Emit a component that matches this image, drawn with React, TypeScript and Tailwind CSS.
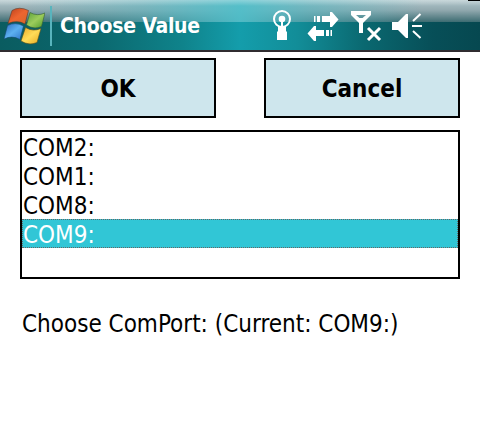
import React from "react";

const ports = ["COM2:", "COM1:", "COM8:", "COM9:"];

function WindowsFlag() {
  return (
    <svg width="42" height="40" viewBox="3 6 42 40" className="block">
      <defs>
        <linearGradient id="red" x1="0" y1="0" x2="1" y2="1"><stop offset="0" stopColor="#b8401c" /><stop offset=".5" stopColor="#ee6530" /><stop offset="1" stopColor="#d86828" /></linearGradient>
        <linearGradient id="green" x1="0" y1="0" x2="1" y2="1"><stop offset="0" stopColor="#5aa03a" /><stop offset=".5" stopColor="#9ccc5c" /><stop offset="1" stopColor="#4e9a28" /></linearGradient>
        <linearGradient id="blue" x1="0" y1="0" x2="1" y2="1"><stop offset="0" stopColor="#2c6cc0" /><stop offset=".5" stopColor="#5cb0f0" /><stop offset="1" stopColor="#2c74c8" /></linearGradient>
        <linearGradient id="yellow" x1="0" y1="0" x2="1" y2="1"><stop offset="0" stopColor="#e8a828" /><stop offset=".5" stopColor="#ffdc58" /><stop offset="1" stopColor="#e8a820" /></linearGradient>
      </defs>
      <path d="M12 10.500Q19 6 28.500 10.500L25 24Q17 19.500 8 23.500Z" fill="url(#red)" stroke="#5b3b2b" strokeWidth=".6" />
      <path d="M30 12.500Q37 16.500 45 13L41.500 26.500Q34 30 26.500 25Z" fill="url(#green)" stroke="#355f36" strokeWidth=".6" />
      <path d="M7.500 25.500Q15 21.500 23.500 26L20 39.500Q12 35 4 39Z" fill="url(#blue)" stroke="#134a72" strokeWidth=".6" />
      <path d="M25.500 27.500Q33 32 41 28.500L37 42.500Q29 46 21 41Z" fill="url(#yellow)" stroke="#57501d" strokeWidth=".6" />
    </svg>
  );
}

function StatusIcons() {
  return (
    <svg width="152" height="36" viewBox="272 8 152 36" fill="#fff" className="block">
      <circle cx="282" cy="19" r="8" fill="none" stroke="#fff" strokeWidth="2" />
      <circle cx="282" cy="19" r="3.300" />
      <path d="M281 20h2v7h3v4l1 1v8h-10v-8l1-1v-4h3z" />
      <path d="M314 16h1.500v6H314zM317 16h3v6h-3zM322 16h8v-4h2l6.500 7.500L332 27h-2v-5h-8z" />
      <path d="M332 30h-1.500v6h1.500zM329 30h-3v6h3zM324 30h-8v-4h-2l-6.500 7.500L314 41h2v-5h8z" />
      <path d="M351 11h20v4l-8 8v10h-4V23l-8-8zM356 15l3.500 3h3l3.500-3z" fillRule="evenodd" />
      <path d="M368 28l12 12M380 28l-12 12" stroke="#fff" strokeWidth="3" />
      <path d="M392 22h6l8-8h2v24h-2l-8-8h-6z" />
      <path d="M413 21l7.500-7M412 26h10M413 31l7.500 7" stroke="#fff" strokeWidth="2" />
    </svg>
  );
}

export default function App() {
  return (
    <div className="h-[443px] w-[480px] overflow-hidden bg-white font-['DejaVu_Sans_Condensed','DejaVu_Sans',sans-serif] text-2xl text-black [font-stretch:condensed]">
      <header className="relative flex h-[52px] border-b-2 border-[#302c30] bg-[linear-gradient(90deg,#0a5c60_0%,#0b686e_20%,#0f838b_38%,#149dab_50%,#128d98_62%,#0a6870_76%,#074f58_90%,#064850_100%)]">
        <div className="absolute inset-x-0 top-0 h-[22px] bg-[linear-gradient(180deg,#b0c6cb_0%,#93aab0_45%,#3d6c72_100%)]" />
        <div className="absolute inset-x-0 top-0 h-[22px] bg-[linear-gradient(90deg,transparent_5%,#58b8c280_30%,#50bfcaf0_50%,#58b8c2a0_64%,transparent_88%)]" />
        <div className="absolute inset-x-0 top-0 h-[6px] bg-[linear-gradient(180deg,#ffffff50,transparent)]" />
        <div className="absolute right-0 top-0 h-px w-3 bg-black" />
        <div className="relative ml-[3px] mt-[6px]"><WindowsFlag /></div>
        <div className="relative ml-[5px] mt-[6px] h-10 w-[2px] bg-[#58b4bd]" />
        <h1 className="relative ml-[8px] mt-[10px] w-[212px] whitespace-nowrap text-[21px] font-bold leading-8 tracking-[-0.25px] text-white">Choose Value</h1>
        <div className="relative mt-2"><StatusIcons /></div>
      </header>
      <main className="px-5 pt-[6px]">
        <div className="flex justify-between">
          <button className="h-[60px] w-[196px] border-2 border-black bg-[#cee6ed] pt-[2px] font-bold">OK</button>
          <button className="h-[60px] w-[196px] border-2 border-black bg-[#cee6ed] pt-[2px] font-bold">Cancel</button>
        </div>
        <ul className="mt-3 h-[149px] border-2 border-black">
          {ports.map((port) => (
            <li key={port} className={port === "COM9:" ? "h-[29px] bg-[#31c6d6] pl-px leading-[33px] text-white outline-1 -outline-offset-1 outline-dotted outline-[#666]" : "h-[29px] pl-px leading-[33px]"}>{port}</li>
          ))}
        </ul>
        <p className="mt-[30px] whitespace-nowrap pl-[2px] leading-[30px]">Choose ComPort: (Current: COM9:)</p>
      </main>
    </div>
  );
}
